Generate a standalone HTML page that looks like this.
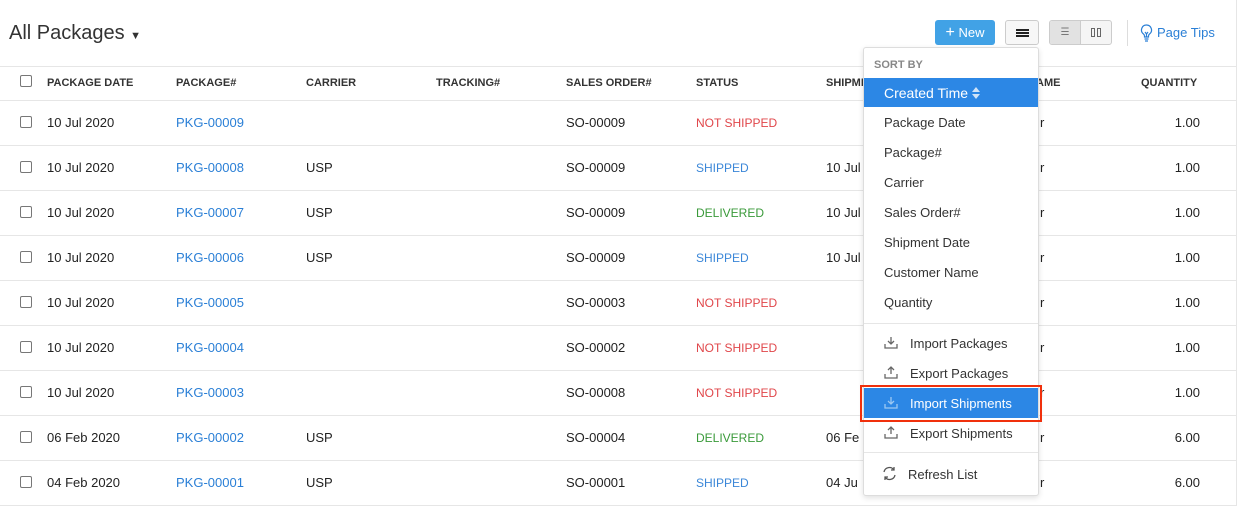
<!DOCTYPE html>
<html><head><style>
*{box-sizing:border-box;margin:0;padding:0}
body{width:1239px;height:506px;overflow:hidden;background:#fff;font-family:"Liberation Sans",sans-serif;color:#212529;position:relative}
.abs{position:absolute;white-space:nowrap}
.title{left:9px;top:22px;font-size:20px;color:#333}
.hl{position:absolute;left:0;width:1237px;height:1px;background:#e6e6e6}
.th{position:absolute;top:77px;font-size:11px;font-weight:bold;color:#333}
.cb{position:absolute;left:20px;width:12px;height:12px;border:1px solid #777;border-radius:2px;background:#fff}
.c{position:absolute;font-size:13px;color:#222}
.lnk{color:#2a7fd6}
.ns{color:#e0464a;font-size:12px}
.sh{color:#3b87d8;font-size:12px}
.dl{color:#3a9a3a;font-size:12px}
.menu{position:absolute;left:863px;top:47px;width:176px;height:449px;background:#fff;border:1px solid #ddd;border-radius:3px;box-shadow:0 2px 6px rgba(0,0,0,.12)}
.mi{position:absolute;left:20px;font-size:13px;color:#333}
.icn{position:absolute;left:20px}
</style></head><body>
<div class="abs title">All Packages <span style="font-size:11px">▼</span></div>
<div class="abs" style="left:935px;top:20px;width:60px;height:25px;background:#41a2e6;border-radius:3px;color:#fff;font-size:13px;line-height:25px;text-align:center"><span style="font-size:16px">+</span> New</div>
<div class="abs" style="left:1005px;top:20px;width:34px;height:25px;border:1px solid #ccc;border-radius:3px;background:#f7f7f7"><div style="position:absolute;left:10px;top:8px;width:13px;height:2px;background:#222;box-shadow:0 3px 0 #222,0 6px 0 #222"></div></div>
<div class="abs" style="left:1049px;top:20px;width:63px;height:25px;border:1px solid #ccc;border-radius:3px;background:#f5f5f5;overflow:hidden"><div style="width:31px;height:100%;background:#e2e2e2;border-right:1px solid #ccc;color:#777;font-size:10px;text-align:center;line-height:23px">☰</div><div style="position:absolute;left:41px;top:7px;width:4px;height:9px;border:1px solid #666"></div><div style="position:absolute;left:47px;top:7px;width:4px;height:9px;border:1px solid #666"></div></div>
<div class="abs" style="left:1127px;top:20px;width:1px;height:26px;background:#ddd"></div>
<svg class="abs" style="left:1140px;top:24px" width="13" height="18" viewBox="0 0 13 18" fill="none" stroke="#2a7fd6" stroke-width="1.2"><path d="M6.5 1a5 5 0 0 0-3 9c.6.5 1 1.2 1 2v1h4v-1c0-.8.4-1.5 1-2a5 5 0 0 0-3-9zM4.5 15h4M5 17h3M5 8l1.5 2 1.5-2M6.5 10v3"/></svg>
<div class="abs" style="left:1157px;top:25px;font-size:13px;color:#2a7fd6">Page Tips</div>
<div class="abs" style="left:1236px;top:0;width:1px;height:506px;background:#e6e6e6"></div>
<div class="hl" style="top:66px"></div>
<div class="hl" style="top:100px"></div>
<div class="cb" style="top:75px"></div>
<div class="th" style="left:47px">PACKAGE DATE</div>
<div class="th" style="left:176px">PACKAGE#</div>
<div class="th" style="left:306px">CARRIER</div>
<div class="th" style="left:436px">TRACKING#</div>
<div class="th" style="left:566px">SALES ORDER#</div>
<div class="th" style="left:696px">STATUS</div>
<div class="th" style="left:826px">SHIPMENT DATE</div>
<div class="th" style="left:1036px">AME</div>
<div class="th" style="left:1141px">QUANTITY</div>
<div id="rows"></div>
<script>
var d=[["10 Jul 2020","PKG-00009","","SO-00009","NOT SHIPPED","ns","","1.00"],
["10 Jul 2020","PKG-00008","USP","SO-00009","SHIPPED","sh","10 Jul","1.00"],
["10 Jul 2020","PKG-00007","USP","SO-00009","DELIVERED","dl","10 Jul","1.00"],
["10 Jul 2020","PKG-00006","USP","SO-00009","SHIPPED","sh","10 Jul","1.00"],
["10 Jul 2020","PKG-00005","","SO-00003","NOT SHIPPED","ns","","1.00"],
["10 Jul 2020","PKG-00004","","SO-00002","NOT SHIPPED","ns","","1.00"],
["10 Jul 2020","PKG-00003","","SO-00008","NOT SHIPPED","ns","","1.00"],
["06 Feb 2020","PKG-00002","USP","SO-00004","DELIVERED","dl","06 Fe","6.00"],
["04 Feb 2020","PKG-00001","USP","SO-00001","SHIPPED","sh","04 Ju","6.00"]];
var h="";
d.forEach(function(r,i){var y=100+i*45;var t=y+15;
h+='<div class="cb" style="top:'+(y+16)+'px"></div>';
h+='<div class="c" style="left:47px;top:'+t+'px">'+r[0]+'</div>';
h+='<div class="c lnk" style="left:176px;top:'+t+'px">'+r[1]+'</div>';
h+='<div class="c" style="left:306px;top:'+t+'px">'+r[2]+'</div>';
h+='<div class="c" style="left:566px;top:'+t+'px">'+r[3]+'</div>';
h+='<div class="c '+r[5]+'" style="left:696px;top:'+(t+1)+'px">'+r[4]+'</div>';
h+='<div class="c" style="left:826px;top:'+t+'px">'+r[6]+'</div>';
h+='<div class="c" style="left:1040px;top:'+t+'px">r</div>';
h+='<div class="c" style="right:39px;top:'+t+'px">'+r[7]+'</div>';
h+='<div class="hl" style="top:'+(y+45)+'px"></div>';});
document.getElementById("rows").innerHTML=h;
</script>
<div class="menu">
<div class="mi" style="left:10px;top:11px;font-size:11px;font-weight:bold;color:#888">SORT BY</div>
<div class="abs" style="left:0;top:30px;width:174px;height:29px;background:#2c87e5"></div>
<div class="mi" style="top:37px;color:#fff;font-size:14px">Created Time</div>
<svg class="abs" style="left:108px;top:38px" width="8" height="14" viewBox="0 0 8 14" fill="#cfe3f8"><path d="M0 6l4-5 4 5zM0 8l4 5 4-5z"/></svg>
<div class="mi" style="top:67px">Package Date</div>
<div class="mi" style="top:97px">Package#</div>
<div class="mi" style="top:127px">Carrier</div>
<div class="mi" style="top:157px">Sales Order#</div>
<div class="mi" style="top:187px">Shipment Date</div>
<div class="mi" style="top:217px">Customer Name</div>
<div class="mi" style="top:247px">Quantity</div>
<div class="abs" style="left:0;top:275px;width:174px;height:1px;background:#e6e6e6"></div>
<svg class="icn" style="top:288px" width="14" height="13" viewBox="0 0 14 13" fill="none" stroke="#666" stroke-width="1.3"><path d="M7 1v7M4 5l3 3 3-3M1 8v4h12V8"/></svg>
<div class="mi" style="left:46px;top:288px">Import Packages</div>
<svg class="icn" style="top:318px" width="14" height="13" viewBox="0 0 14 13" fill="none" stroke="#666" stroke-width="1.3"><path d="M7 8V1M4 4l3-3 3 3M1 8v4h12V8"/></svg>
<div class="mi" style="left:46px;top:318px">Export Packages</div>
<div class="abs" style="left:0;top:340px;width:174px;height:30px;background:#2c87e5"></div>
<svg class="icn" style="top:348px" width="14" height="13" viewBox="0 0 14 13" fill="none" stroke="#9cc8f2" stroke-width="1.3"><path d="M7 1v7M4 5l3 3 3-3M1 8v4h12V8"/></svg>
<div class="mi" style="left:46px;top:348px;color:#fff">Import Shipments</div>
<svg class="icn" style="top:378px" width="14" height="13" viewBox="0 0 14 13" fill="none" stroke="#666" stroke-width="1.3"><path d="M7 8V1M4 4l3-3 3 3M1 8v4h12V8"/></svg>
<div class="mi" style="left:46px;top:378px">Export Shipments</div>
<div class="abs" style="left:0;top:404px;width:174px;height:1px;background:#e6e6e6"></div>
<svg class="icn" style="left:18px;top:418px" width="15" height="15" viewBox="0 0 15 15" fill="none" stroke="#555" stroke-width="1.3"><path d="M2 6a5.5 5.5 0 0 1 10-2M13 9a5.5 5.5 0 0 1-10 2M12 1v3H9M3 14v-3h3"/></svg>
<div class="mi" style="left:44px;top:419px">Refresh List</div>
</div>
<div class="abs" style="left:860px;top:385px;width:182px;height:37px;border:2px solid #f0300c"></div>
</body></html>
